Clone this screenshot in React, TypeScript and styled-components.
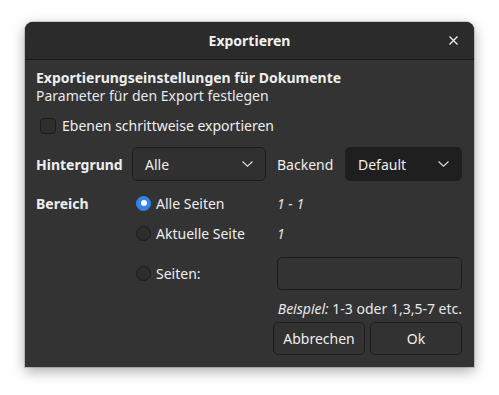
import { createGlobalStyle, styled } from "styled-components"

const Global = createGlobalStyle`
  html, body {
    margin: 0;
    background: #ffffff;
  }
  body {
    font-family: "Noto Sans", "DejaVu Sans", sans-serif;
    font-size: 14px;
  }
`

const Page = styled.div`
  width: 499px;
  height: 395px;
  padding: 22px 25px 0;
  box-sizing: border-box;
`

const Dialog = styled.div`
  width: 449px;
  height: 345px;
  display: flex;
  flex-direction: column;
  background: #333333;
  border-radius: 8px 8px 0 0;
  box-shadow: 0 4px 14px rgba(0, 0, 0, 0.35), 0 0 0 1px rgba(0, 0, 0, 0.15);
  color: #eeeeee;
  overflow: hidden;
`

const TitleBar = styled.div`
  height: 37px;
  flex-shrink: 0;
  position: relative;
  display: flex;
  align-items: center;
  justify-content: center;
  background: #2b2b2b;
  border-bottom: 1px solid #1b1b1b;
`

const Title = styled.div`
  font-weight: 700;
  font-size: 14px;
  color: #f0f0f0;
`

const Close = styled.button`
  position: absolute;
  right: 12px;
  top: 10px;
  width: 17px;
  height: 17px;
  padding: 0;
  border: none;
  background: transparent;
  display: flex;
  align-items: center;
  justify-content: center;
`

const Body = styled.div`
  flex: 1;
  padding: 9px 12px 12px 11px;
  display: flex;
  flex-direction: column;
`

const Heading = styled.div`
  font-weight: 700;
  line-height: 18px;
`

const Sub = styled.div`
  line-height: 18px;
  color: #e8e8e8;
`

const CheckRow = styled.label`
  margin-top: 12px;
  margin-left: 4px;
  display: flex;
  align-items: center;
  gap: 6px;
  line-height: 18px;
`

const Box = styled.span`
  width: 14px;
  height: 14px;
  border: 1px solid #1c1c1c;
  border-radius: 4px;
  background: #2e2e2e;
`

const TopRow = styled.div`
  margin-top: 12px;
  display: grid;
  grid-template-columns: 96px 134px 79px 117px;
  align-items: center;
  height: 34px;
`

const Label = styled.div<{ $bold?: boolean; $indent?: number }>`
  font-weight: ${(p) => (p.$bold ? 700 : 400)};
  padding-left: ${(p) => p.$indent ?? 0}px;
`

const Combo = styled.div<{ $flat?: boolean }>`
  height: 34px;
  box-sizing: border-box;
  display: flex;
  align-items: center;
  justify-content: space-between;
  padding: 0 12px 0 12px;
  border-radius: 5px;
  background: ${(p) => (p.$flat ? "#1f1f1f" : "#303030")};
  border: 1px solid ${(p) => (p.$flat ? "#1f1f1f" : "#1b1b1b")};
`

const RangeGrid = styled.div`
  margin-top: 7px;
  display: grid;
  grid-template-columns: 96px 145px 185px;
  grid-template-rows: 30px 31px 48px;
  align-items: center;
`

const RadioLabel = styled.label`
  display: flex;
  align-items: center;
  gap: 5px;
  padding-left: 4px;
`

const Radio = styled.span<{ $checked?: boolean }>`
  width: 15px;
  height: 15px;
  box-sizing: border-box;
  border-radius: 50%;
  display: flex;
  align-items: center;
  justify-content: center;
  background: ${(p) => (p.$checked ? "#3584e4" : "#2d2d2d")};
  border: 1px solid ${(p) => (p.$checked ? "#3584e4" : "#1a1a1a")};
  &::after {
    content: "";
    width: 6px;
    height: 6px;
    border-radius: 50%;
    background: #ffffff;
    display: ${(p) => (p.$checked ? "block" : "none")};
  }
`

const Value = styled.div`
  font-style: italic;
  color: #e0e0e0;
`

const Input = styled.div`
  height: 33px;
  box-sizing: border-box;
  border: 1px solid #1c1c1c;
  border-radius: 5px;
  background: #333333;
`

const Hint = styled.div`
  margin-top: 3px;
  text-align: right;
  line-height: 18px;
  color: #e8e8e8;
  em {
    font-style: italic;
  }
`

const Buttons = styled.div`
  margin-top: 4px;
  display: flex;
  justify-content: flex-end;
  gap: 5px;
`

const Button = styled.button`
  width: 92px;
  height: 33px;
  border-radius: 5px;
  border: 1px solid #1c1c1c;
  background: #323232;
  color: #eeeeee;
  font-family: inherit;
  font-size: 14px;
`

function Chevron() {
  return (
    <svg width="11" height="6" viewBox="0 0 11 6">
      <path d="M0.5 0.5 L5.5 5.2 L10.5 0.5" fill="none" stroke="#dddddd" strokeWidth="1.1" />
    </svg>
  )
}

export default function App() {
  return (
    <Page>
      <Global />
      <Dialog>
        <TitleBar>
          <Title>Exportieren</Title>
          <Close>
            <svg width="9" height="9" viewBox="0 0 9 9">
              <path d="M0.5 0.5 L8.5 8.5 M8.5 0.5 L0.5 8.5" stroke="#f0f0f0" strokeWidth="1.3" />
            </svg>
          </Close>
        </TitleBar>
        <Body>
          <Heading>Exportierungseinstellungen für Dokumente</Heading>
          <Sub>Parameter für den Export festlegen</Sub>
          <CheckRow>
            <Box />
            Ebenen schrittweise exportieren
          </CheckRow>
          <TopRow>
            <Label $bold>Hintergrund</Label>
            <Combo>
              Alle
              <Chevron />
            </Combo>
            <Label $indent={11}>Backend</Label>
            <Combo $flat>
              Default
              <Chevron />
            </Combo>
          </TopRow>
          <RangeGrid>
            <Label $bold>Bereich</Label>
            <RadioLabel>
              <Radio $checked />
              Alle Seiten
            </RadioLabel>
            <Value>1 - 1</Value>
            <div />
            <RadioLabel>
              <Radio />
              Aktuelle Seite
            </RadioLabel>
            <Value>1</Value>
            <div />
            <RadioLabel>
              <Radio />
              Seiten:
            </RadioLabel>
            <Input />
          </RangeGrid>
          <Hint>
            <em>Beispiel:</em> 1-3 oder 1,3,5-7 etc.
          </Hint>
          <Buttons>
            <Button>Abbrechen</Button>
            <Button>Ok</Button>
          </Buttons>
        </Body>
      </Dialog>
    </Page>
  )
}
